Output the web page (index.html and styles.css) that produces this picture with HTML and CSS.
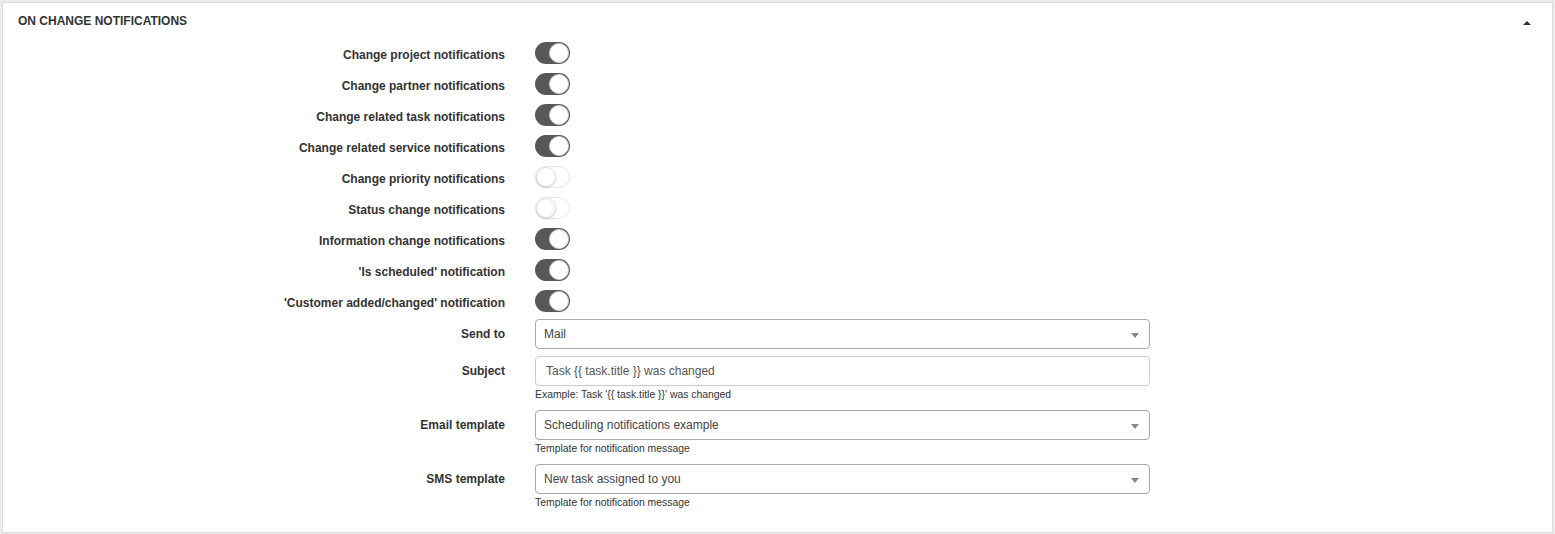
FILE: index.html
```html
<!DOCTYPE html>
<html>
<head>
<meta charset="utf-8">
<link rel="stylesheet" href="styles.css">
</head>
<body>
<div class="panel">
  <div class="panel-head">
    <span class="panel-title">ON CHANGE NOTIFICATIONS</span>
    <span class="caret"></span>
  </div>
  <div class="panel-body">
    <div class="row toggle-row"><label class="lbl">Change project notifications</label><span class="switch on"><span class="knob"></span></span></div>
    <div class="row toggle-row"><label class="lbl">Change partner notifications</label><span class="switch on"><span class="knob"></span></span></div>
    <div class="row toggle-row"><label class="lbl">Change related task notifications</label><span class="switch on"><span class="knob"></span></span></div>
    <div class="row toggle-row"><label class="lbl">Change related service notifications</label><span class="switch on"><span class="knob"></span></span></div>
    <div class="row toggle-row"><label class="lbl">Change priority notifications</label><span class="switch off"><span class="knob"></span></span></div>
    <div class="row toggle-row"><label class="lbl">Status change notifications</label><span class="switch off"><span class="knob"></span></span></div>
    <div class="row toggle-row"><label class="lbl">Information change notifications</label><span class="switch on"><span class="knob"></span></span></div>
    <div class="row toggle-row"><label class="lbl">'Is scheduled' notification</label><span class="switch on"><span class="knob"></span></span></div>
    <div class="row toggle-row"><label class="lbl">'Customer added/changed' notification</label><span class="switch on"><span class="knob"></span></span></div>

    <div class="row field-row first-field"><label class="lbl">Send to</label>
      <div class="ctrl"><div class="select"><span>Mail</span><span class="arrow"></span></div></div>
    </div>
    <div class="row field-row"><label class="lbl">Subject</label>
      <div class="ctrl"><div class="input">Task {{ task.title }} was changed</div>
      <div class="help">Example: Task '{{ task.title }}' was changed</div></div>
    </div>
    <div class="row field-row"><label class="lbl">Email template</label>
      <div class="ctrl"><div class="select"><span>Scheduling notifications example</span><span class="arrow"></span></div>
      <div class="help">Template for notification message</div></div>
    </div>
    <div class="row field-row"><label class="lbl">SMS template</label>
      <div class="ctrl"><div class="select"><span>New task assigned to you</span><span class="arrow"></span></div>
      <div class="help">Template for notification message</div></div>
    </div>
  </div>
</div>
</body>
</html>
```

FILE: styles.css
```css
html, body {
  margin: 0;
  padding: 0;
}
body {
  background: #ececec;
  font-family: "Liberation Sans", Arial, sans-serif;
  color: #333;
  padding: 2px;
  height: 530px;
}
.panel {
  background: #fff;
  border: 1px solid #dcdcdc;
  box-sizing: border-box;
  height: 531px;
}
.panel-head {
  display: flex;
  justify-content: space-between;
  align-items: center;
  padding: 10px 21px 7px 15px;
  height: 17px;
}
.panel-title {
  font-size: 12px;
  font-weight: bold;
  color: #333;
  line-height: 17px;
}
.caret {
  width: 0;
  height: 0;
  border-left: 4px solid transparent;
  border-right: 4px solid transparent;
  border-bottom: 4px solid #333;
  margin-top: 3px;
}
.panel-body {
  display: flex;
  flex-direction: column;
  padding: 0 15px;
}
.row {
  display: grid;
  grid-template-columns: 487px 615px;
  column-gap: 30px;
}
.toggle-row {
  height: 31px;
  align-items: center;
}
.lbl {
  text-align: right;
  font-size: 12px;
  font-weight: bold;
  color: #333;
  line-height: 14px;
}
.toggle-row .lbl {
  padding-top: 4px;
}
.switch {
  position: relative;
  display: block;
  width: 35px;
  height: 22px;
  border-radius: 11px;
  box-sizing: border-box;
}
.switch.on {
  background: #585858;
}
.switch.off {
  background: #fff;
  border: 1px solid #e6e6e6;
}
.knob {
  position: absolute;
  top: 1px;
  width: 20px;
  height: 20px;
  border-radius: 50%;
  background: #fff;
  box-sizing: border-box;
}
.switch.on .knob {
  right: 1px;
  border: 1px solid #d0d0d0;
}
.switch.off .knob {
  left: 0;
  top: 0;
  border: 1px solid #e0e0e0;
  box-shadow: 0 1px 2px rgba(0,0,0,0.18);
}
.field-row {
  align-items: start;
  margin-top: 7px;
}
.field-row.first-field {
  margin-top: 3px;
}
.field-row .lbl {
  line-height: 30px;
}
.ctrl {
  display: flex;
  flex-direction: column;
}
.select, .input {
  height: 30px;
  box-sizing: border-box;
  border-radius: 4px;
  font-size: 12px;
  display: flex;
  align-items: center;
}
.select {
  border: 1px solid #aaa;
  color: #444;
  padding: 0 10px 0 8px;
  justify-content: space-between;
}
.input {
  border: 1px solid #ccc;
  color: #555;
  padding: 0 10px;
}
.arrow {
  width: 0;
  height: 0;
  border-left: 4px solid transparent;
  border-right: 4px solid transparent;
  border-top: 5px solid #888;
  margin-top: 2px;
}
.help {
  font-size: 10.4px;
  color: #333;
  line-height: 13px;
  margin-top: 2px;
  margin-bottom: 2px;
}
```
